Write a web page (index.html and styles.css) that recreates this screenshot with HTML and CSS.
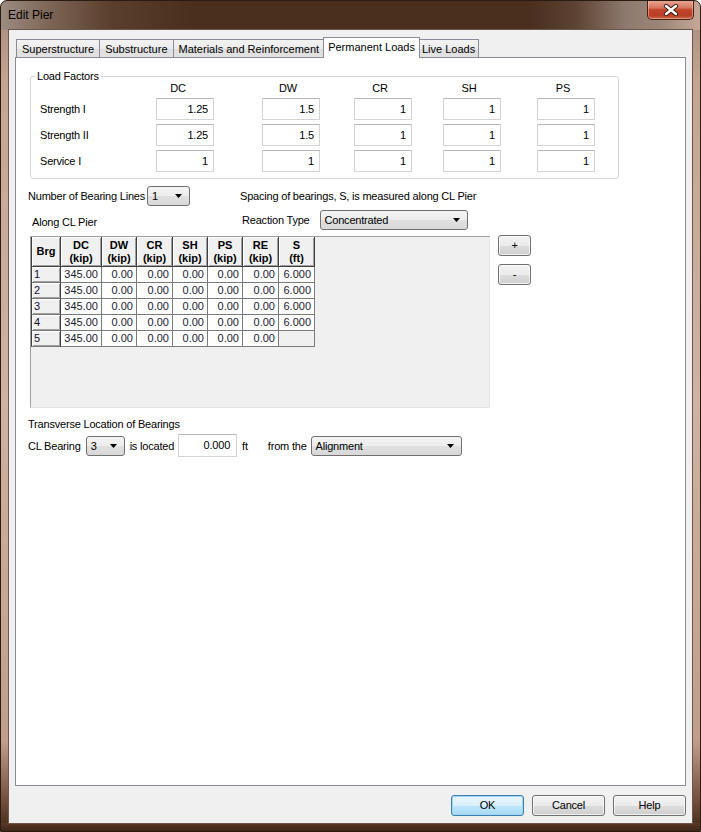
FILE: index.html
```html
<!DOCTYPE html>
<html>
<head>
<meta charset="utf-8">
<title>Edit Pier</title>
<link rel="stylesheet" href="styles.css">
</head>
<body>
<div class="window">
  <div class="titlebar">
    <span class="title">Edit Pier</span>
    <div class="close">
      <svg width="16" height="12" viewBox="0 0 16 12">
        <path d="M3 2 L13 10 M13 2 L3 10" stroke="#3a1a10" stroke-width="4.2" stroke-linecap="round" fill="none"/>
        <path d="M3 2 L13 10 M13 2 L3 10" stroke="#ffffff" stroke-width="2.4" stroke-linecap="round" fill="none"/>
      </svg>
    </div>
  </div>
  <div class="client">
    <div class="tabs">
      <div class="tab">Superstructure</div>
      <div class="tab">Substructure</div>
      <div class="tab">Materials and Reinforcement</div>
      <div class="tab active">Permanent Loads</div>
      <div class="tab">Live Loads</div>
    </div>
    <div class="panel">
      <fieldset class="group">
        <legend>Load Factors</legend>
        <div class="factors">
          <span></span>
          <span class="colhead colhead-dc">DC</span>
          <span class="colhead">DW</span>
          <span class="colhead">CR</span>
          <span class="colhead">SH</span>
          <span class="colhead">PS</span>

          <span class="rowlabel">Strength I</span>
          <span class="field">1.25</span>
          <span class="field">1.5</span>
          <span class="field">1</span>
          <span class="field">1</span>
          <span class="field">1</span>

          <span class="rowlabel">Strength II</span>
          <span class="field">1.25</span>
          <span class="field">1.5</span>
          <span class="field">1</span>
          <span class="field">1</span>
          <span class="field">1</span>

          <span class="rowlabel">Service I</span>
          <span class="field">1</span>
          <span class="field">1</span>
          <span class="field">1</span>
          <span class="field">1</span>
          <span class="field">1</span>
        </div>
      </fieldset>

      <div class="bearing">
        <div class="cell-row">
          <span>Number of Bearing Lines</span>
          <div class="combo combo-nbl"><span>1</span><svg class="arrow" width="7" height="4" viewBox="0 0 7 4"><path d="M0 0 H7 L3.5 4 Z" fill="#000"/></svg></div>
        </div>
        <div class="cell-row">Spacing of bearings, S, is measured along CL Pier</div>
        <div class="along">Along CL Pier</div>
        <div class="cell-row reaction">
          <span>Reaction Type</span>
          <div class="combo combo-react"><span>Concentrated</span><svg class="arrow" width="7" height="4" viewBox="0 0 7 4"><path d="M0 0 H7 L3.5 4 Z" fill="#000"/></svg></div>
        </div>
      </div>

      <div class="grid-area">
        <div class="grid-box">
          <table class="data">
            <colgroup>
              <col class="w30"><col class="w41"><col class="w35"><col class="w36"><col class="w35"><col class="w35"><col class="w36"><col class="w36">
            </colgroup>
            <thead>
              <tr>
                <th>Brg</th>
                <th>DC<br>(kip)</th>
                <th>DW<br>(kip)</th>
                <th>CR<br>(kip)</th>
                <th>SH<br>(kip)</th>
                <th>PS<br>(kip)</th>
                <th>RE<br>(kip)</th>
                <th>S<br>(ft)</th>
              </tr>
            </thead>
            <tbody>
              <tr><td class="rh">1</td><td>345.00</td><td>0.00</td><td>0.00</td><td>0.00</td><td>0.00</td><td>0.00</td><td>6.000</td></tr>
              <tr><td class="rh">2</td><td>345.00</td><td>0.00</td><td>0.00</td><td>0.00</td><td>0.00</td><td>0.00</td><td>6.000</td></tr>
              <tr><td class="rh">3</td><td>345.00</td><td>0.00</td><td>0.00</td><td>0.00</td><td>0.00</td><td>0.00</td><td>6.000</td></tr>
              <tr><td class="rh">4</td><td>345.00</td><td>0.00</td><td>0.00</td><td>0.00</td><td>0.00</td><td>0.00</td><td>6.000</td></tr>
              <tr><td class="rh">5</td><td>345.00</td><td>0.00</td><td>0.00</td><td>0.00</td><td>0.00</td><td>0.00</td><td class="blank"></td></tr>
            </tbody>
          </table>
        </div>
        <div class="side-buttons">
          <div class="btn small">+</div>
          <div class="btn small">-</div>
        </div>
      </div>

      <div class="transverse-title">Transverse Location of Bearings</div>
      <div class="transverse">
        <span>CL Bearing</span>
        <div class="combo combo-brg"><span>3</span><svg class="arrow" width="7" height="4" viewBox="0 0 7 4"><path d="M0 0 H7 L3.5 4 Z" fill="#000"/></svg></div>
        <span class="is-located">is located</span>
        <span class="field field-loc">0.000</span>
        <span class="ft">ft</span>
        <span class="from">from the</span>
        <div class="combo combo-from"><span>Alignment</span><svg class="arrow" width="7" height="4" viewBox="0 0 7 4"><path d="M0 0 H7 L3.5 4 Z" fill="#000"/></svg></div>
      </div>
    </div>
    <div class="buttons">
      <div class="btn default">OK</div>
      <div class="btn">Cancel</div>
      <div class="btn">Help</div>
    </div>
  </div>
</div>
</body>
</html>
```

FILE: styles.css
```css
* { box-sizing: border-box; }

html, body {
  margin: 0;
  padding: 0;
  background: #ffffff;
}

body {
  font-family: "Liberation Sans", Arial, sans-serif;
  font-size: 11px;
  letter-spacing: -0.2px;
  color: #000;
}

.window {
  width: 701px;
  height: 832px;
  display: flex;
  flex-direction: column;
  border: 1px solid #2c1b10;
  border-radius: 7px 7px 0 0;
  overflow: hidden;
  background:
    linear-gradient(90deg, #9c8c82 0px, #7f6858 45px, #5a3e2e 110px, #4a2f1f 190px, #4a2f1f 530px, #5d4333 575px, #8e7a6e 625px, #9c8678 660px, #c6a898 700px) top left / 100% 29px no-repeat,
    linear-gradient(180deg, #5a3b29, #3d2516) bottom left / 100% 8px no-repeat,
    linear-gradient(180deg, #a58878 0px, #c4a594 80px, #cfb2a2 400px, #c09e8b 740px, #6a4834 805px, #3d2516 832px);
}

.titlebar {
  height: 28px;
  display: flex;
  align-items: flex-start;
  padding-left: 7px;
}

.title {
  font-family: "Liberation Sans", Arial, sans-serif;
  font-size: 12px;
  letter-spacing: 0;
  line-height: 28px;
  color: #000;
}

.close {
  margin-left: auto;
  margin-right: 6px;
  margin-top: -1px;
  width: 47px;
  height: 20px;
  border: 1px solid #4a2014;
  border-top: none;
  border-radius: 0 0 5px 5px;
  background: linear-gradient(180deg, #e9a99b 0%, #d6785f 40%, #c2442a 52%, #b63f26 80%, #cf6446 100%);
  box-shadow: inset 0 0 0 1px rgba(255, 220, 200, 0.45);
  display: flex;
  align-items: center;
  justify-content: center;
}

.client {
  flex: 1;
  margin: 0 7px 7px 7px;
  border: 1px solid #6a564a;
  background: #f0f0f0;
  display: flex;
  flex-direction: column;
  padding: 7px 6px 7px 6px;
}

.tabs {
  display: flex;
  align-items: flex-end;
  height: 21px;
  margin-bottom: -1px;
  padding-left: 1px;
}

.tab {
  height: 19px;
  line-height: 18px;
  padding: 0 5px;
  letter-spacing: 0;
  border: 1px solid #898c95;
  border-bottom: none;
  border-right: none;
  background: linear-gradient(180deg, #f3f3f3 0%, #ebebeb 50%, #dedede 51%, #e3e3e3 100%);
  white-space: nowrap;
}

.tab:nth-child(5) {
  border-right: 1px solid #898c95;
  padding: 0 3px;
}

.tab.active {
  position: relative;
  z-index: 2;
  height: 21px;
  line-height: 19px;
  padding: 0 4px;
  margin: 0 -2px 0 -1px;
  background: #ffffff;
  border-right: 1px solid #898c95;
}

.panel {
  position: relative;
  flex: 1;
  background: #ffffff;
  border: 1px solid #898c95;
  padding: 12px 0 0 12px;
}

/* Load factors group */
.group {
  margin: 0 0 0 2px;
  width: 589px;
  border: 1px solid #d5d5d5;
  border-radius: 3px;
  padding: 0 0 6px 9px;
  min-width: 0;
}

.group legend {
  padding: 0 2px;
  margin-left: -5px;
  line-height: 13px;
}

.factors {
  display: grid;
  grid-template-columns: 116px 106px 92px 89px 94px 60px;
  grid-template-rows: 11px 22px 22px 22px;
  row-gap: 4px;
  align-items: center;
}

.colhead {
  width: 58px;
  padding-right: 6px;
  text-align: center;
  line-height: 11px;
}

.colhead-dc {
  padding-right: 14px;
}

.rowlabel {
  line-height: 13px;
}

.field {
  display: block;
  width: 58px;
  height: 22px;
  line-height: 20px;
  border: 1px solid #d3d3d3;
  border-top-color: #b5b7bd;
  background: #fff;
  text-align: right;
  padding-right: 5px;
}

/* bearing lines area */
.bearing {
  display: grid;
  grid-template-columns: 212px auto;
  grid-template-rows: 20px 20px;
  row-gap: 4px;
  margin-top: 7px;
  align-items: center;
}

.cell-row {
  display: flex;
  align-items: center;
}

.along {
  padding-left: 4px;
  padding-top: 3px;
}

.reaction {
  padding-left: 2px;
}

.combo {
  position: relative;
  height: 20px;
  border: 1px solid #707070;
  border-radius: 3px;
  background: linear-gradient(180deg, #f4f4f4 0%, #ececec 50%, #e0e0e0 51%, #d8d8d8 100%);
  display: flex;
  align-items: center;
  padding-left: 4px;
}

.combo .arrow {
  margin-left: auto;
  margin-right: 7px;
}

.combo-nbl {
  width: 43px;
  margin-left: 2px;
}

.combo-react {
  width: 148px;
  margin-left: 10px;
}

.combo-brg {
  width: 39px;
  margin-left: 5px;
}

.combo-from {
  width: 151px;
  margin-left: 4px;
}

/* grid */
.grid-area {
  display: flex;
  align-items: flex-start;
  margin-top: 6px;
  margin-left: 2px;
}

.grid-box {
  width: 460px;
  height: 172px;
  background: #f0f0f0;
  border-top: 1px solid #a0a0a0;
  border-left: 1px solid #a0a0a0;
  border-right: 1px solid #e3e3e3;
  border-bottom: 1px solid #e3e3e3;
}

.data {
  border-collapse: separate;
  border-spacing: 0;
  table-layout: fixed;
  width: 284px;
  font-family: "Liberation Sans", Arial, sans-serif;
  font-size: 11px;
  letter-spacing: 0;
}

.w30 { width: 30px; }
.w35 { width: 35px; }
.w36 { width: 36px; }
.w41 { width: 41px; }

.data th {
  height: 30px;
  padding: 0;
  font-weight: bold;
  line-height: 13px;
  text-align: center;
  background: #f0f0f0;
  border-right: 1px solid #404040;
  border-bottom: 1px solid #404040;
  box-shadow: inset 1px 1px 0 #ffffff, inset -1px -1px 0 #a0a0a0;
}

.data th:first-child {
  border-left: 1px solid #404040;
}

.data td {
  height: 16px;
  padding: 0 3px 0 0;
  line-height: 15px;
  text-align: right;
  background: #ffffff;
  color: #1a1a30;
  border-right: 1px solid #7a7a7a;
  border-bottom: 1px solid #7a7a7a;
  white-space: nowrap;
}

.data td.rh {
  text-align: left;
  padding-left: 2px;
  background: #f0f0f0;
  color: #101030;
  border-left: 1px solid #404040;
  border-right: 1px solid #404040;
  box-shadow: inset 1px 1px 0 #ffffff, inset -1px -1px 0 #a0a0a0;
}

.data td.blank {
  background: #f0f0f0;
}

.side-buttons {
  display: flex;
  flex-direction: column;
  gap: 8px;
  margin-left: 8px;
  margin-top: -1px;
}

.btn {
  width: 73px;
  height: 21px;
  line-height: 19px;
  text-align: center;
  border: 1px solid #707070;
  border-radius: 3px;
  background: linear-gradient(180deg, #f2f2f2 0%, #ebebeb 50%, #dddddd 51%, #cfcfcf 100%);
  box-shadow: inset 0 0 0 1px rgba(255, 255, 255, 0.7);
}

.btn.small {
  width: 33px;
}

.btn.default {
  border-color: #3c7fb1;
  box-shadow: inset 0 0 0 1px #9fd6f4;
  background: linear-gradient(180deg, #eaf6fd 0%, #d9f0fc 50%, #bee6fd 51%, #a7d9f5 100%);
}

/* transverse */
.transverse-title {
  margin-top: 10px;
  line-height: 12px;
}

.transverse {
  display: flex;
  align-items: center;
  height: 23px;
  margin-top: 4px;
}

.is-located {
  margin-left: 5px;
}

.field-loc {
  width: 59px;
  height: 23px;
  line-height: 21px;
  margin-left: 4px;
  padding-right: 6px;
}

.ft {
  margin-left: 5px;
}

.from {
  margin-left: 20px;
}

.buttons {
  display: flex;
  justify-content: flex-end;
  gap: 8px;
  margin-top: 9px;
}
```
